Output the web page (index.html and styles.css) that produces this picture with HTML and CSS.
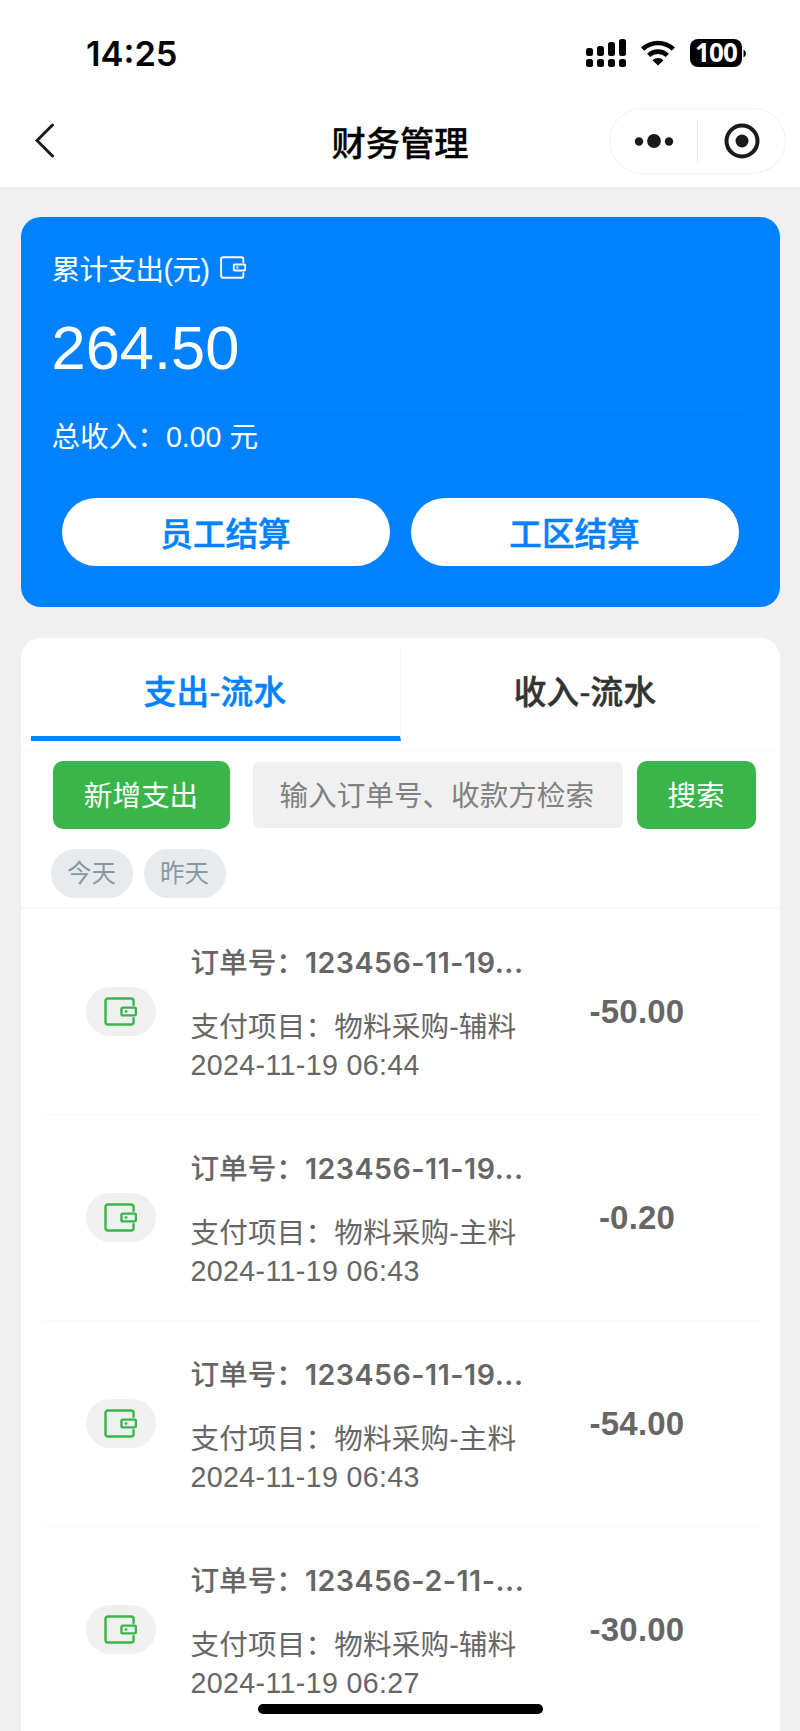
FILE: index.html
```html
<!DOCTYPE html>
<html lang="zh-CN">
<head>
    <meta charset="UTF-8">
    <meta name="viewport" content="width=device-width, initial-scale=1.0">
    <title>财务管理</title>
    <link rel="stylesheet" href="styles.css">
</head>
<body>
<svg width="0" height="0" class="defs">
    <symbol id="wallet" viewBox="0 0 34 30">
        <path d="M30.500 8V4a2.500 2.500 0 0 0-2.500-2.500H4A2.500 2.500 0 0 0 1.500 4v22A2.500 2.500 0 0 0 4 28.500h24a2.500 2.500 0 0 0 2.500-2.500v-4"/>
        <rect x="18" y="11" width="15" height="8" rx="1.500"/>
        <path d="M22.500 15h.5"/>
    </symbol>
</svg>
<div class="wrap">
    <div class="header">
        <div class="status">
            <span class="time">14:25</span>
            <div class="status-icons">
                <svg class="signal" width="41" height="29" viewBox="0 0 41 29">
                    <rect x="0" y="9" width="7" height="8" rx="2.500"/><rect x="0" y="20" width="7" height="8" rx="2.500"/>
                    <rect x="11" y="7" width="7" height="10" rx="2.500"/><rect x="11" y="20" width="7" height="8" rx="2.500"/>
                    <rect x="22" y="3" width="7" height="14" rx="2.500"/><rect x="22" y="20" width="7" height="8" rx="2.500"/>
                    <rect x="33" y="0" width="7" height="17" rx="2.500"/><rect x="33" y="20" width="7" height="8" rx="2.500"/>
                </svg>
                <svg class="wifi" width="34" height="26" viewBox="0 0 34 26">
                    <path d="M1.700 9.200a22 22 0 0 1 30.600 0M7.700 15.300a13.500 13.500 0 0 1 18.600 0"/>
                    <path class="fill" d="M17 25.500l-5.500-5.300a8 8 0 0 1 11 0z"/>
                </svg>
                <div class="battery">100</div>
                <svg width="4" height="9" viewBox="0 0 4 9"><path d="M0.500 0.500a4.500 4.500 0 0 1 0 8z"/></svg>
            </div>
        </div>
        <div class="nav">
            <svg class="back" width="20" height="36" viewBox="0 0 20 36"><path d="M17.500 2L2 17.500L17.500 33"/></svg>
            <h1>财务管理</h1>
            <div class="capsule">
                <svg width="40" height="16" viewBox="0 0 40 16"><circle cx="5" cy="8.500" r="4.200"/><circle cx="20" cy="8" r="6.900"/><circle cx="35" cy="8.500" r="4.200"/></svg>
                <i></i>
                <svg width="36" height="36" viewBox="0 0 36 36"><circle class="ring" cx="18" cy="18" r="15.500"/><circle cx="18" cy="18" r="6.500"/></svg>
            </div>
        </div>
    </div>

    <div class="card">
        <div class="label">累计支出(元) <svg class="wallet"><use href="#wallet"/></svg></div>
        <div class="total">264.50</div>
        <div class="income">总收入：0.00 元</div>
        <div class="card-btn">
            <a href="#">员工结算</a>
            <a href="#">工区结算</a>
        </div>
    </div>

    <div class="panel">
        <ul class="tabs">
            <li class="on">支出-流水</li>
            <li>收入-流水</li>
        </ul>
        <div class="filter">
            <div class="search">
                <a href="#" class="btn add">新增支出</a>
                <input type="text" placeholder="输入订单号、收款方检索">
                <a href="#" class="btn">搜索</a>
            </div>
            <div class="days"><span>今天</span><span>昨天</span></div>
        </div>
        <ul class="list">
            <li>
                <div class="icon"><svg class="wallet"><use href="#wallet"/></svg></div>
                <div class="info">
                    <h2>订单号：<b>123456-11-19...</b></h2>
                    <p>支付项目：物料采购-辅料</p>
                    <p class="date">2024-11-19 06:44</p>
                </div>
                <div class="money">-50.00</div>
            </li>
            <li>
                <div class="icon"><svg class="wallet"><use href="#wallet"/></svg></div>
                <div class="info">
                    <h2>订单号：<b>123456-11-19...</b></h2>
                    <p>支付项目：物料采购-主料</p>
                    <p class="date">2024-11-19 06:43</p>
                </div>
                <div class="money">-0.20</div>
            </li>
            <li>
                <div class="icon"><svg class="wallet"><use href="#wallet"/></svg></div>
                <div class="info">
                    <h2>订单号：<b>123456-11-19...</b></h2>
                    <p>支付项目：物料采购-主料</p>
                    <p class="date">2024-11-19 06:43</p>
                </div>
                <div class="money">-54.00</div>
            </li>
            <li>
                <div class="icon"><svg class="wallet"><use href="#wallet"/></svg></div>
                <div class="info">
                    <h2>订单号：<b>123456-2-11-...</b></h2>
                    <p>支付项目：物料采购-辅料</p>
                    <p class="date">2024-11-19 06:27</p>
                </div>
                <div class="money">-30.00</div>
            </li>
        </ul>
    </div>
    <div class="home-bar"></div>
</div>
</body>
</html>
```
FILE: styles.css
```css
*{ margin: 0; padding: 0; box-sizing: border-box;}
ul{ list-style: none;}
a{ text-decoration: none; color: inherit;}
svg{ display: block; flex: none;}
body{
    background: #f0f0f0;
    font-family: "Liberation Sans","Noto Sans CJK SC",sans-serif;
    font-size: 28.6px;
    color: #666;
}
.defs{ position: absolute;}
.wrap{
    position: relative;
    width: 800px;
    height: 1731px;
    overflow: hidden;
}

/* 顶部 */
.header{
    height: 187px;
    background: #fff;
    color: #000;
}
.status{
    display: flex;
    justify-content: space-between;
    height: 108px;
    padding: 0 53px 0 86px;
}
.time{
    padding-top: 32px;
    font: 600 34.4px/44px Inter,sans-serif;
}
.status-icons{
    display: flex;
    align-items: center;
    height: 106px;
}
.wifi{ margin: 0 15px 0 14px;}
.wifi path{ fill: none; stroke: #000; stroke-width: 4.6;}
.wifi .fill{ fill: #000; stroke: none;}
.battery{
    width: 52px;
    height: 28px;
    margin-right: 1px;
    border-radius: 8px;
    background: #000;
    color: #fff;
    text-align: center;
    letter-spacing: -0.8px;
    font: 700 26px/27px "Noto Sans",sans-serif;
}
.nav{
    display: grid;
    grid-template-columns: 1fr 200px 1fr;
    align-items: center;
    height: 66px;
    padding: 0 14px;
}
.nav h1{
    text-align: center;
    font: 500 34.3px/48px "Noto Sans CJK SC",sans-serif;
    -webkit-text-stroke: 0.3px;
}
.back{
    margin-left: 21px;
    fill: none;
    stroke: #1a1a1a;
    stroke-width: 3;
    stroke-linecap: round;
}
.capsule{
    display: flex;
    align-items: center;
    justify-self: end;
    width: 177px;
    height: 66px;
    padding-left: 24px;
    border: 1px solid #f0f0f0;
    border-radius: 33px;
    fill: #1a1a1a;
}
.capsule i{
    width: 1px;
    height: 41px;
    margin: 0 26px 0 23px;
    background: #ebebeb;
}
.capsule .ring{ fill: none; stroke: #1a1a1a; stroke-width: 4;}

/* 汇总 */
.card{
    height: 390px;
    margin: 30px 20.5px 0;
    padding: 30px 31px 0;
    border-radius: 20px;
    background: #0081ff;
    color: #fff;
}
.label{
    display: flex;
    align-items: center;
    gap: 11px;
    height: 41px;
    letter-spacing: -0.6px;
}
.label .wallet{ width: 26px; height: 23px; stroke: #fff;}
.wallet{
    width: 33px;
    height: 29px;
    fill: none;
    stroke: #39b54a;
    stroke-width: 2.5;
    stroke-linecap: round;
}
.total{
    height: 128px;
    padding-top: 25px;
    border-bottom: 1px solid #007cf6;
    font-size: 61.4px;
    line-height: 70px;
}
.income{ height: 42px; line-height: 43px;}
.card-btn{
    display: flex;
    gap: 21px;
    padding: 40px 10px 0;
}
.card-btn a{
    flex: 1;
    height: 68px;
    border-radius: 34px;
    background: #fff;
    color: #0081ff;
    text-align: center;
    font: 500 32.6px/68px "Noto Sans CJK SC",sans-serif;
    -webkit-text-stroke: 0.5px;
}

/* 流水 */
.panel{
    height: 1200px;
    margin: 31px 20.5px 0;
    border-radius: 20px 20px 0 0;
    background: #fff;
}
.tabs{
    display: flex;
    height: 113px;
    padding: 10px 10px 0;
    border-bottom: 1px solid #f8f8f8;
}
.tabs li{
    flex: 1;
    height: 93px;
    color: #333;
    text-align: center;
    letter-spacing: 0.3px;
    font: 500 32.6px/90px "Liberation Sans","Noto Sans CJK SC",sans-serif;
    -webkit-text-stroke: 0.5px;
}
.tabs .on{
    border-right: 1px solid #f5f5f5;
    border-bottom: 5px solid #0081ff;
    color: #0081ff;
}
.filter{
    height: 158px;
    padding: 10px 24px 0 32px;
    border-bottom: 2px solid #f8f8f8;
}
.search{
    display: flex;
    align-items: center;
}
.btn{
    width: 119px;
    height: 68px;
    border-radius: 10px;
    background: #39b54a;
    color: #fff;
    line-height: 70px;
    text-align: center;
}
.add{ width: 177px;}
.search input{
    width: 370px;
    height: 66px;
    margin: 0 14px 0 23px;
    padding: 3px 27px 0;
    border: 0;
    border-radius: 6px;
    background: #f0f0f0;
    font: inherit;
}
.search input::placeholder{ color: #808080;}
.days{
    display: flex;
    gap: 11px;
    margin: 20px 0 0 -2px;
}
.days span{
    width: 82px;
    height: 49px;
    border-radius: 25px;
    background: #e7ebed;
    color: #8799a3;
    font-size: 24.5px;
    line-height: 50px;
    text-align: center;
}
.list li{
    display: flex;
    align-items: center;
    height: 205.9px;
    margin: 0 20px;
    padding-left: 45px;
    border-bottom: 1px solid #fafafa;
}
.icon{
    display: flex;
    align-items: center;
    justify-content: center;
    width: 70px;
    height: 49px;
    border-radius: 25px;
    background: #f0f0f0;
}
.info{
    width: 340px;
    margin-left: 35px;
    padding-top: 4px;
    white-space: nowrap;
    line-height: 39px;
}
.info h2{
    margin-bottom: 26px;
    font: 500 28.6px/39px "Noto Sans CJK SC",sans-serif;
}
.info h2 b{
    letter-spacing: 0.5px;
    font: 600 28.6px/39px Inter,sans-serif;
}
.info p{ letter-spacing: 0.15px;}
.info .date{
    margin-top: -1px;
    letter-spacing: 0.35px;
}
.money{
    width: 213px;
    padding-top: 1px;
    text-align: center;
    font-size: 33px;
    font-weight: bold;
    letter-spacing: 0.2px;
}
.home-bar{
    position: absolute;
    left: 258px;
    bottom: 17px;
    width: 285px;
    height: 10px;
    border-radius: 5px;
    background: #000;
}
```
